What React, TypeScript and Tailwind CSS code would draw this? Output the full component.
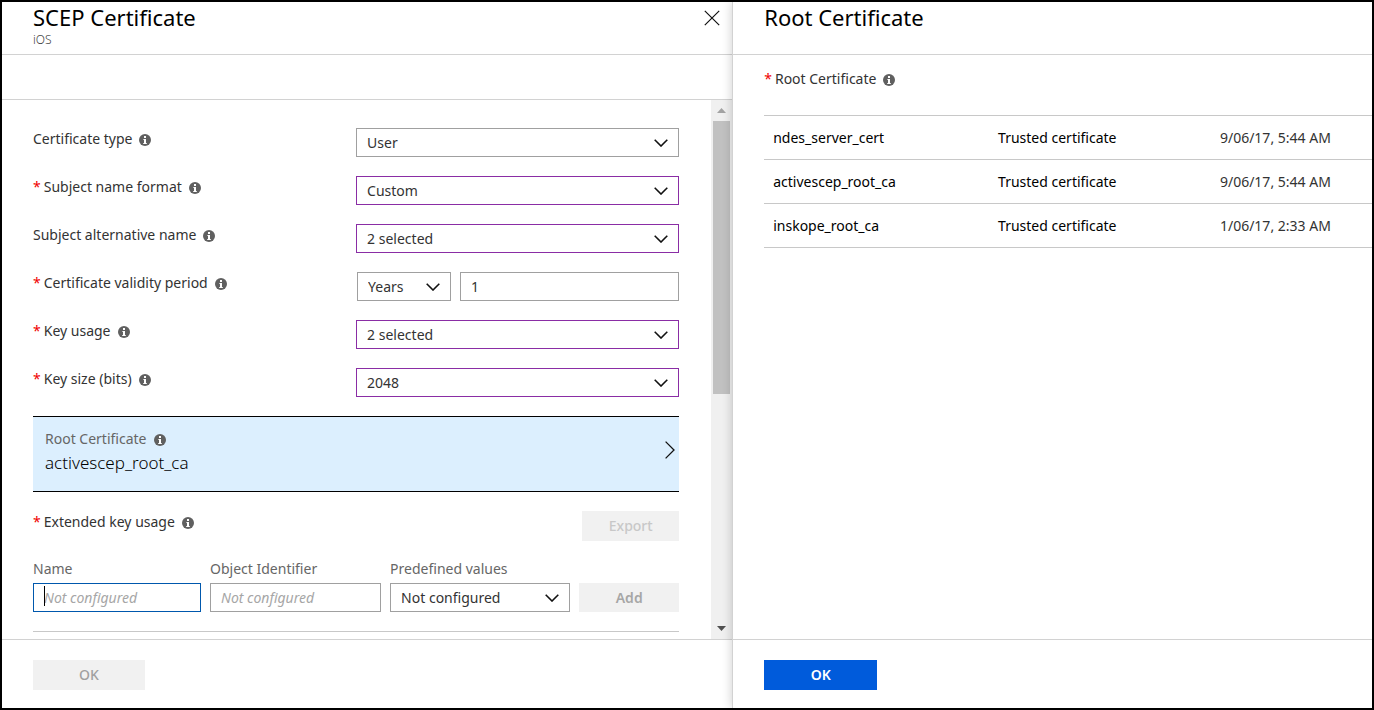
import React, { useId } from "react";

function InfoIcon() {
  return (
    <svg className="size-3 shrink-0 translate-y-px" viewBox="0 0 12 12" aria-hidden="true">
      <circle cx="6" cy="6" r="6" fill="#606060" />
      <rect x="5" y="2" width="2" height="2" fill="#fff" />
      <path d="M4.4 5H7v4h.8v1H4.2V9H5V6h-.6z" fill="#fff" />
    </svg>
  );
}

function Chevron() {
  return (
    <svg
      className="pointer-events-none absolute top-1/2 right-[11px] h-2 w-[14px] -translate-y-1/2"
      viewBox="0 0 14 8"
      fill="none"
      aria-hidden="true"
    >
      <path d="M0.7 0.7L7 7L13.3 0.7" stroke="#111" strokeWidth="1.6" />
    </svg>
  );
}

function Required() {
  return <span className="mr-[3px] text-[#f00000]">*</span>;
}

type LabelProps = { htmlFor?: string; required?: boolean; children: React.ReactNode };

function FieldLabel({ htmlFor, required, children }: LabelProps) {
  return (
    <label htmlFor={htmlFor} className="flex items-center gap-[7px] leading-[22px]">
      <span>
        {required && <Required />}
        {children}
      </span>
      <InfoIcon />
    </label>
  );
}

type SelectProps = { id?: string; value: string; edited?: boolean; label?: string };

function Select({ id, value, edited, label }: SelectProps) {
  return (
    <div className="relative">
      <select
        id={id}
        aria-label={label}
        defaultValue={value}
        className={
          "block h-[29px] w-full appearance-none border bg-white pr-8 pl-[10px] " +
          (edited ? "border-[#8a2da5]" : "border-[#a0a0a0]")
        }
      >
        <option>{value}</option>
      </select>
      <Chevron />
    </div>
  );
}

type Field = { label: string; value: string; required?: boolean; edited?: boolean };

function SelectRow({ label, value, required, edited }: Field) {
  const id = useId();
  return (
    <div className="grid grid-cols-2 items-start">
      <FieldLabel htmlFor={id} required={required}>
        {label}
      </FieldLabel>
      <Select id={id} value={value} edited={edited} />
    </div>
  );
}

function Scrollbar() {
  return (
    <div className="flex w-[21px] shrink-0 flex-col items-center bg-[#f0f0f0]" aria-hidden="true">
      <div className="flex h-[21px] shrink-0 items-center">
        <svg className="h-[5px] w-[9px]" viewBox="0 0 9 5">
          <path d="M0 5L4.5 0L9 5z" fill="#a3a3a3" />
        </svg>
      </div>
      <div className="w-full flex-1 px-0.5">
        <div className="h-[55%] bg-[#c1c1c1]" />
      </div>
      <div className="flex h-[21px] shrink-0 items-center">
        <svg className="h-[5px] w-[9px]" viewBox="0 0 9 5">
          <path d="M0 0L4.5 5L9 0z" fill="#505050" />
        </svg>
      </div>
    </div>
  );
}

const certificates = [
  { name: "ndes_server_cert", type: "Trusted certificate", date: "9/06/17, 5:44 AM" },
  { name: "activescep_root_ca", type: "Trusted certificate", date: "9/06/17, 5:44 AM" },
  { name: "inskope_root_ca", type: "Trusted certificate", date: "1/06/17, 2:33 AM" },
];

function ScepPanel() {
  return (
    <section className="flex w-[53.3%] min-w-0 flex-col">
      <header className="flex h-[53px] shrink-0 items-start justify-between border-b border-[#d2d2d2] pr-3 pl-[31px]">
        <div>
          <h1 className="pt-[3px] text-[22px] leading-6 text-black">SCEP Certificate</h1>
          <p className="text-xs leading-[22px] font-light text-[#444]">iOS</p>
        </div>
        <button type="button" aria-label="Close" className="mt-2">
          <svg className="size-4" viewBox="0 0 16 16" fill="none" aria-hidden="true">
            <path d="M0.8 0.8L15.2 15.2M15.2 0.8L0.8 15.2" stroke="#111" strokeWidth="1.2" />
          </svg>
        </button>
      </header>
      <div className="h-[45px] shrink-0 border-b border-[#d2d2d2]" />
      <div className="flex min-h-0 flex-1">
        <form className="min-w-0 flex-1 overflow-hidden pt-7 pr-8 pl-[31px]">
          <div className="flex flex-col gap-[19px]">
            <SelectRow label="Certificate type" value="User" />
            <SelectRow label="Subject name format" value="Custom" required edited />
            <SelectRow label="Subject alternative name" value="2 selected" edited />
            <div className="grid grid-cols-2 items-start">
              <FieldLabel htmlFor="validity" required>
                Certificate validity period
              </FieldLabel>
              <div className="grid grid-cols-[3fr_7fr] gap-[9px] pl-px">
                <Select value="Years" label="Validity unit" />
                <input
                  id="validity"
                  defaultValue="1"
                  className="h-[29px] w-full min-w-0 border border-[#a0a0a0] px-[10px]"
                />
              </div>
            </div>
            <SelectRow label="Key usage" value="2 selected" required edited />
            <SelectRow label="Key size (bits)" value="2048" required edited />
            <button
              type="button"
              className="flex h-[76px] items-start justify-between border-y border-black bg-[#dceffe] pr-1 pl-3 text-left"
            >
              <span className="flex flex-col pt-[11px]">
                <span className="flex items-center gap-[7px] leading-[22px] text-[#666]">
                  Root Certificate
                  <InfoIcon />
                </span>
                <span className="text-[17px] leading-[26px] font-light text-black">activescep_root_ca</span>
              </span>
              <svg className="mt-6 h-[18px] w-[10px]" viewBox="0 0 10 18" fill="none" aria-hidden="true">
                <path d="M0.6 0.6L9 9L0.6 17.4" stroke="#111" strokeWidth="1.3" />
              </svg>
            </button>
            <div className="flex items-start justify-between">
              <FieldLabel required>Extended key usage</FieldLabel>
              <button
                type="button"
                disabled
                className="h-[30px] w-[97px] bg-[#f1f1f1] font-medium text-[#c8c8c8]"
              >
                Export
              </button>
            </div>
            <div className="grid grid-cols-[168fr_171fr_180fr_100fr] items-end gap-[9px]">
              <div className="flex flex-col gap-[5px]">
                <label htmlFor="eku-name" className="leading-[18px] text-[#666]">
                  Name
                </label>
                <div className="relative">
                  <input
                    id="eku-name"
                    placeholder="Not configured"
                    className="block h-[29px] w-full border border-[#0058ad] px-[10px] outline-none placeholder:text-[#a6a6a6] placeholder:italic"
                  />
                  <span className="absolute top-[3px] left-[11px] h-5 w-px bg-black" />
                </div>
              </div>
              <div className="flex flex-col gap-[5px]">
                <label htmlFor="eku-oid" className="leading-[18px] text-[#666]">
                  Object Identifier
                </label>
                <input
                  id="eku-oid"
                  placeholder="Not configured"
                  className="block h-[29px] w-full border border-[#a0a0a0] px-[10px] placeholder:text-[#a6a6a6] placeholder:italic"
                />
              </div>
              <div className="flex flex-col gap-[5px]">
                <label htmlFor="eku-preset" className="leading-[18px] text-[#666]">
                  Predefined values
                </label>
                <Select id="eku-preset" value="Not configured" />
              </div>
              <button type="button" disabled className="h-[29px] bg-[#f1f1f1] font-semibold text-[#a6a6a6]">
                Add
              </button>
            </div>
            <hr className="border-[#c8c8c8]" />
          </div>
        </form>
        <Scrollbar />
      </div>
      <footer className="h-[69px] shrink-0 border-t border-[#d2d2d2] pt-5 pl-[31px]">
        <button type="button" disabled className="h-[30px] w-28 bg-[#f1f1f1] font-medium text-[#a0a0a0]">
          OK
        </button>
      </footer>
    </section>
  );
}

function RootPanel() {
  return (
    <section className="relative flex min-w-0 flex-1 flex-col border-l border-[#d2d2d2] bg-white shadow-[0_0_10px_rgba(0,0,0,0.2)]">
      <header className="h-[53px] shrink-0 border-b border-[#d2d2d2] pl-[31px]">
        <h2 className="pt-[3px] text-[22px] leading-6 text-black">Root Certificate</h2>
      </header>
      <div className="min-h-0 flex-1 overflow-hidden pt-[13px] pl-[31px]">
        <FieldLabel required>Root Certificate</FieldLabel>
        <table className="mt-[25px] w-full table-fixed border-collapse border-t border-[#c8c8c8] text-left">
          <tbody>
            {certificates.map((cert) => (
              <tr key={cert.name} className="h-11 border-b border-[#c8c8c8]">
                <td className="w-[37%] pl-[9px] font-[450] text-black">{cert.name}</td>
                <td className="w-[36.5%] pl-[9px] font-[450] text-black">{cert.type}</td>
                <td className="pl-[9px]">{cert.date}</td>
              </tr>
            ))}
          </tbody>
        </table>
      </div>
      <footer className="h-[69px] shrink-0 border-t border-[#d2d2d2] pt-5 pl-[31px]">
        <button type="button" className="h-[30px] w-[113px] bg-[#005bdb] font-semibold text-white">
          OK
        </button>
      </footer>
    </section>
  );
}

export default function App() {
  return (
    <main className="flex h-screen overflow-hidden border-2 border-black bg-white font-['Noto_Sans','Open_Sans',sans-serif] text-sm text-[#333]">
      <ScepPanel />
      <RootPanel />
    </main>
  );
}
